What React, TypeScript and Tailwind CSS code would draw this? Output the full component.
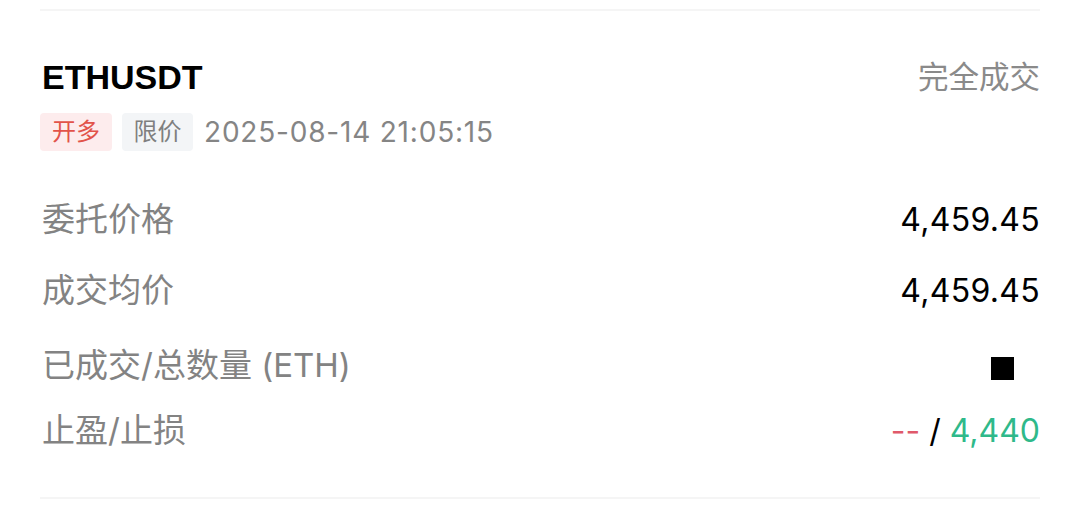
const font = { fontFamily: '"Inter", "Noto Sans CJK SC", sans-serif' };
const helv = { fontFamily: '"Liberation Sans", "Noto Sans CJK SC", sans-serif' };

type Row = { label: string; value: React.ReactNode; mt: string };

const rows: Row[] = [
  { label: '委托价格', value: <span className="tracking-[0.3px] text-black">4,459.45</span>, mt: 'mt-[49px]' },
  { label: '成交均价', value: <span className="tracking-[0.3px] text-black">4,459.45</span>, mt: 'mt-[31px]' },
  {
    label: '已成交/总数量 (ETH)',
    value: <span className="mr-[26px] inline-block h-[23px] w-[23px] bg-black align-middle" />,
    mt: 'mt-[35px]',
  },
  {
    label: '止盈/止损',
    value: (
      <span>
        <span className="text-[#e0596a]">--</span>
        <span className="text-black"> / </span>
        <span className="text-[#2fb98a]">4,440</span>
      </span>
    ),
    mt: 'mt-[25px]',
  },
];

export default function App() {
  return (
    <div className="h-[510px] w-[1080px] bg-white px-[40px]" style={font}>
      <div className="mt-[9px] h-[2px] bg-[#f5f5f5]" />

      {/* Header */}
      <div className="mt-[46px] flex h-[40px] items-center justify-between">
        <span className="pl-[2px] text-[34px] font-bold text-black" style={helv}>
          ETHUSDT
        </span>
        <span className="text-[30.5px] text-[#8a8a8a]">完全成交</span>
      </div>

      {/* Tags + time */}
      <div className="mt-[16px] flex h-[38px] items-center">
        <span className="flex h-[38px] w-[72px] items-center justify-center rounded-[4px] bg-[#fdeced] text-[24px] text-[#e2534a]">
          开多
        </span>
        <span className="ml-[10px] flex h-[38px] w-[71px] items-center justify-center rounded-[4px] bg-[#f3f5f7] text-[24px] text-[#7f7f7f]">
          限价
        </span>
        <span className="ml-[11px] text-[28px] tracking-[0.8px] text-[#858585]">2025-08-14 21:05:15</span>
      </div>

      {/* Detail rows */}
      {rows.map(r => (
        <div key={r.label} className={`${r.mt} flex h-[40px] items-center justify-between`}>
          <span className="pl-[2px] text-[33px] text-[#838383]">{r.label}</span>
          <span className="text-[32px]">{r.value}</span>
        </div>
      ))}

      <div className="mt-[46px] h-[2px] bg-[#f5f5f5]" />
    </div>
  );
}
